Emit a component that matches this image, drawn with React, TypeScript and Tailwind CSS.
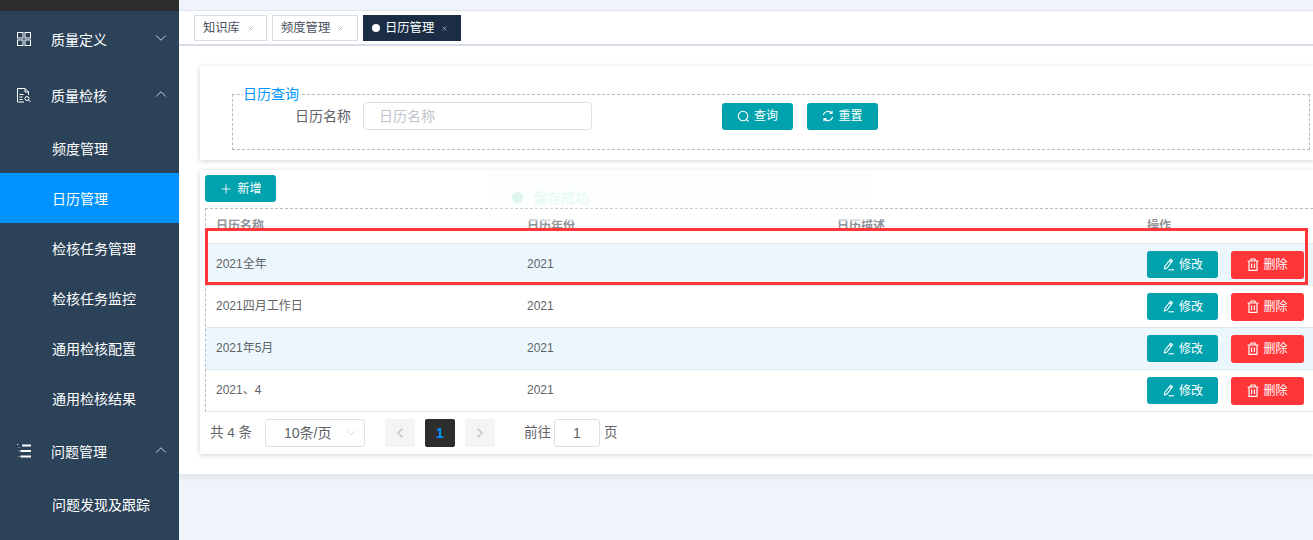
import React from "react";
import { ChevronDown, ChevronUp, ChevronLeft, ChevronRight, Plus, X } from "lucide-react";

const font = "[font-family:'Liberation_Sans','Noto_Sans_CJK_SC',sans-serif]";

const GridIcon = () => (
  <svg width="14" height="14" viewBox="0 0 14 14" fill="none" stroke="white" strokeWidth="1">
    <rect x="0.5" y="0.5" width="5.5" height="5.5" />
    <rect x="8" y="0.5" width="5.5" height="5.5" />
    <rect x="0.5" y="8" width="5.5" height="5.5" />
    <rect x="8" y="8" width="5.5" height="5.5" />
    <path d="M3 6.5v1.5M11 6.5v1.5M6.5 3h1.5M6.5 11h1.5" stroke="#9fb0bf" />
  </svg>
);

const DocSearchIcon = () => (
  <svg width="14" height="15" viewBox="0 0 14 15" fill="none" stroke="white" strokeWidth="1">
    <path d="M11.5 7V4L8 .5H.5v13.5H7" />
    <path d="M8 .5V4h3.5" />
    <path d="M2.5 6.5h4M2.5 9h3M2.5 11.5h3" />
    <circle cx="10" cy="10.5" r="2" />
    <path d="M11.5 12l2 2" />
  </svg>
);

const ListIcon = () => (
  <svg width="14" height="14" viewBox="0 0 14 14" fill="none" stroke="white">
    <path d="M5 1.5h9M3.5 7H14M3.5 12.5H14" strokeWidth="2" />
    <path d="M0 .5h1.500M1.500 3.500h1M1.500 7h1M1.500 12.500h1" strokeWidth="1" stroke="#b8c4cf" />
  </svg>
);

const PencilIcon = () => (
  <svg width="13" height="13" viewBox="0 0 13 13" fill="none" stroke="currentColor" strokeWidth="1.1">
    <path d="M8.500 1.200l2 1.500-5.500 7.300-2.500 1 .3-2.600z" />
    <path d="M7.400 2.700l2 1.500" />
    <path d="M6.500 11.800h5.500" />
  </svg>
);

const TrashIcon = () => (
  <svg width="12" height="13" viewBox="0 0 12 13" fill="none" stroke="currentColor" strokeWidth="1.2">
    <path d="M.5 3h11M4 3V1h4v2" />
    <path d="M2 3v9.300h8V3" />
    <path d="M4.600 5.500v4.500M7.400 5.500v4.500" />
  </svg>
);

const SearchIcon = () => (
  <svg width="13" height="13" viewBox="0 0 13 13" fill="none" stroke="currentColor" strokeWidth="1.1">
    <circle cx="6" cy="6" r="4.700" />
    <path d="M9.500 9.500l2 2" />
  </svg>
);

const RefreshIcon = () => (
  <svg width="12" height="12" viewBox="0 0 12 12" fill="none" stroke="currentColor" strokeWidth="1.2">
    <path d="M1.300 5A4.800 4.800 0 0 1 9.600 3" />
    <path d="M10.700 7A4.800 4.800 0 0 1 2.400 9" />
    <path d="M10 .8V3.400H7.400M2 11.200V8.600h2.600" />
  </svg>
);

function Top({ icon, label, open }: { icon: React.ReactNode; label: string; open?: boolean }) {
  return (
    <div className="h-14 flex items-center pl-[17px] pr-[9px] text-white text-sm">
      <span className="w-[34px] flex">{icon}</span>
      <span className="flex-1 pt-[2px]">{label}</span>
      {open ? <ChevronUp size={18} strokeWidth={1.2} className="text-[#d5e2ea] -mt-[2px]" /> : <ChevronDown size={18} strokeWidth={1.2} className="text-[#d5e2ea] -mt-[3px]" />}
    </div>
  );
}

function Sub({ label, active }: { label: string; active?: boolean }) {
  return <div className={`h-[50px] flex items-center pl-[52px] pt-[2px] text-white text-sm ${active ? "bg-[#0093ff]" : ""}`}>{label}</div>;
}

function Tab({ label, active, cls }: { label: string; active?: boolean; cls: string }) {
  return (
    <div className={`h-[26px] flex items-center pl-2 text-[12.3px] border ${cls} ${active ? "bg-[#1b2d45] border-[#1b2d45] text-white" : "bg-white border-[#d8dce5] text-[#495060]"}`}>
      {active && <span className="w-2 h-2 rounded-full bg-white mr-[5px]" />}
      <span>{label}</span>
      <X size={7} strokeWidth={2} className={`ml-[7px] ${active ? "text-[#cfe0ee]" : "text-[#a0a8b4]"}`} />
    </div>
  );
}

function Btn({ icon, label, red, cls }: { icon: React.ReactNode; label: string; red?: boolean; cls: string }) {
  return (
    <div className={`flex items-center justify-center gap-[4px] rounded-[3px] text-white text-xs ${red ? "bg-[#ff3538]" : "bg-[#00a2ad]"} ${cls}`}>
      {icon}
      <span>{label}</span>
    </div>
  );
}

function Row({ a, striped }: { a: string; striped?: boolean }) {
  return (
    <div className={`h-[42px] grid grid-cols-[311px_310px_310px_1fr] items-center border-b border-[#dfe6ec] text-xs text-[#606266] ${striped ? "bg-[#ecf7fd]" : "bg-white"}`}>
      <div className="pl-[10px] pb-[2px]">{a}</div>
      <div className="pl-[10px] pb-[2px]">2021</div>
      <div />
      <div className="pl-[10px] flex items-center gap-[13px]">
        <Btn cls="w-[71px] h-[27px]" label="修改" icon={<PencilIcon />} />
        <Btn red cls="w-[73px] h-[28px]" label="删除" icon={<TrashIcon />} />
      </div>
    </div>
  );
}

export default function App() {
  return (
    <div className={`${font} relative h-[540px] w-[1313px] flex overflow-hidden bg-[#eff4fb]`}>
      <aside className="w-[179px] shrink-0 bg-[#2b4259] flex flex-col">
        <div className="h-[11px] bg-[#2d2d2d]" />
        <Top label="质量定义" icon={<GridIcon />} />
        <Top open label="质量检核" icon={<DocSearchIcon />} />
        <Sub label="频度管理" />
        <Sub active label="日历管理" />
        <Sub label="检核任务管理" />
        <Sub label="检核任务监控" />
        <Sub label="通用检核配置" />
        <Sub label="通用检核结果" />
        <Top open label="问题管理" icon={<ListIcon />} />
        <Sub label="问题发现及跟踪" />
      </aside>

      <main className="flex-1 min-w-0 flex flex-col">
        <div className="h-[10px] shrink-0" />
        <div className="h-[36px] shrink-0 bg-white border-t border-[#dfe4ed] border-b-2 border-b-[#d8dce5] flex items-start gap-[5px] pl-[15px] pt-[4px]">
          <Tab cls="w-[73px]" label="知识库" />
          <Tab cls="w-[86px]" label="频度管理" />
          <Tab cls="w-[98px]" active label="日历管理" />
        </div>
        <div className="h-[428px] shrink-0 bg-white pt-5 pl-[21px] flex flex-col gap-[10px]">
          <section className="h-[94px] bg-white shadow-[0_1px_5px_rgba(0,0,0,0.18)] pl-8 pr-[3px]">
            <fieldset className="mt-[20px] h-[64px] border border-dashed border-[#bbbbbb] pl-[10px]">
              <legend className="text-sm text-[#0096ff] leading-[16px] px-0">日历查询</legend>
              <div className="flex items-center h-[28px]">
                <span className="ml-[52px] w-[68px] text-sm text-[#606266]">日历名称</span>
                <div className="w-[229px] h-[28px] border border-[#dcdfe6] rounded-[4px] flex items-center pl-[15px] text-sm text-[#c0c4cc]">日历名称</div>
                <Btn cls="ml-[130px] w-[71px] h-[27px]" label="查询" icon={<SearchIcon />} />
                <Btn cls="ml-[14px] w-[71px] h-[27px]" label="重置" icon={<RefreshIcon />} />
              </div>
            </fieldset>
          </section>
          <section className="h-[284px] bg-white shadow-[0_1px_5px_rgba(0,0,0,0.18)] pl-[5px] pt-[5px]">
            <Btn cls="w-[71px] h-[27px]" label="新增" icon={<Plus size={14} strokeWidth={1.5} />} />
            <div className="mt-[6px] border-t border-l border-dashed border-[#bbbbbb]">
              <div className="h-[35px] grid grid-cols-[311px_310px_310px_1fr] items-center border-b border-[#dfe6ec] text-xs font-bold text-[#909399]">
                <div className="pl-[10px]">日历名称</div>
                <div className="pl-[10px]">日历年份</div>
                <div className="pl-[10px]">日历描述</div>
                <div className="pl-[10px]">操作</div>
              </div>
              <Row striped a="2021全年" />
              <Row a="2021四月工作日" />
              <Row striped a="2021年5月" />
              <Row a="2021、4" />
            </div>
            <div className="mt-[7px] h-[28px] flex items-center text-[13.5px] text-[#606266] pl-[5px]">
              <span className="w-[55px]">共 4 条</span>
              <div className="w-[100px] h-[28px] border border-[#dcdfe6] rounded-[3px] flex items-center text-sm pl-[18px] pr-[6px] justify-between">
                <span>10条/页</span>
                <ChevronDown size={14} strokeWidth={1.2} className="text-[#c0c4cc]" />
              </div>
              <div className="ml-5 w-[30px] h-[28px] bg-[#f4f4f5] rounded-[2px] flex items-center justify-center text-[#c0c4cc]"><ChevronLeft size={16} strokeWidth={2.2} /></div>
              <div className="ml-[10px] w-[30px] h-[28px] bg-[#2d2d2d] rounded-[2px] flex items-center justify-center text-[#0093ff] text-sm font-bold">1</div>
              <div className="ml-[10px] w-[30px] h-[28px] bg-[#f4f4f5] rounded-[2px] flex items-center justify-center text-[#c0c4cc]"><ChevronRight size={16} strokeWidth={2.2} /></div>
              <span className="ml-[29px]">前往</span>
              <div className="ml-[3px] w-[46px] h-[28px] border border-[#dcdfe6] rounded-[3px] flex items-center justify-center text-sm">1</div>
              <span className="ml-[4px]">页</span>
            </div>
          </section>
        </div>
        <div className="h-[8px] shrink-0 bg-gradient-to-b from-[#e2e7ee] to-[#eff4fb]" />
      </main>

      <div className="absolute left-[490px] top-[174px] w-[380px] h-[47px] rounded-[4px] bg-[#f7fffc]/30 border border-[#f0faf6]/50 flex items-center pl-[21px] text-sm font-bold text-[#e9faf5]">
        <span className="w-[11px] h-[11px] rounded-full bg-[#dcf6ee] mr-[10px]" />
        保存成功
      </div>
      <div className="absolute left-[205px] top-[228px] w-[1103px] h-[57px] border-[3px] border-[#ff3538] pointer-events-none" />
    </div>
  );
}
